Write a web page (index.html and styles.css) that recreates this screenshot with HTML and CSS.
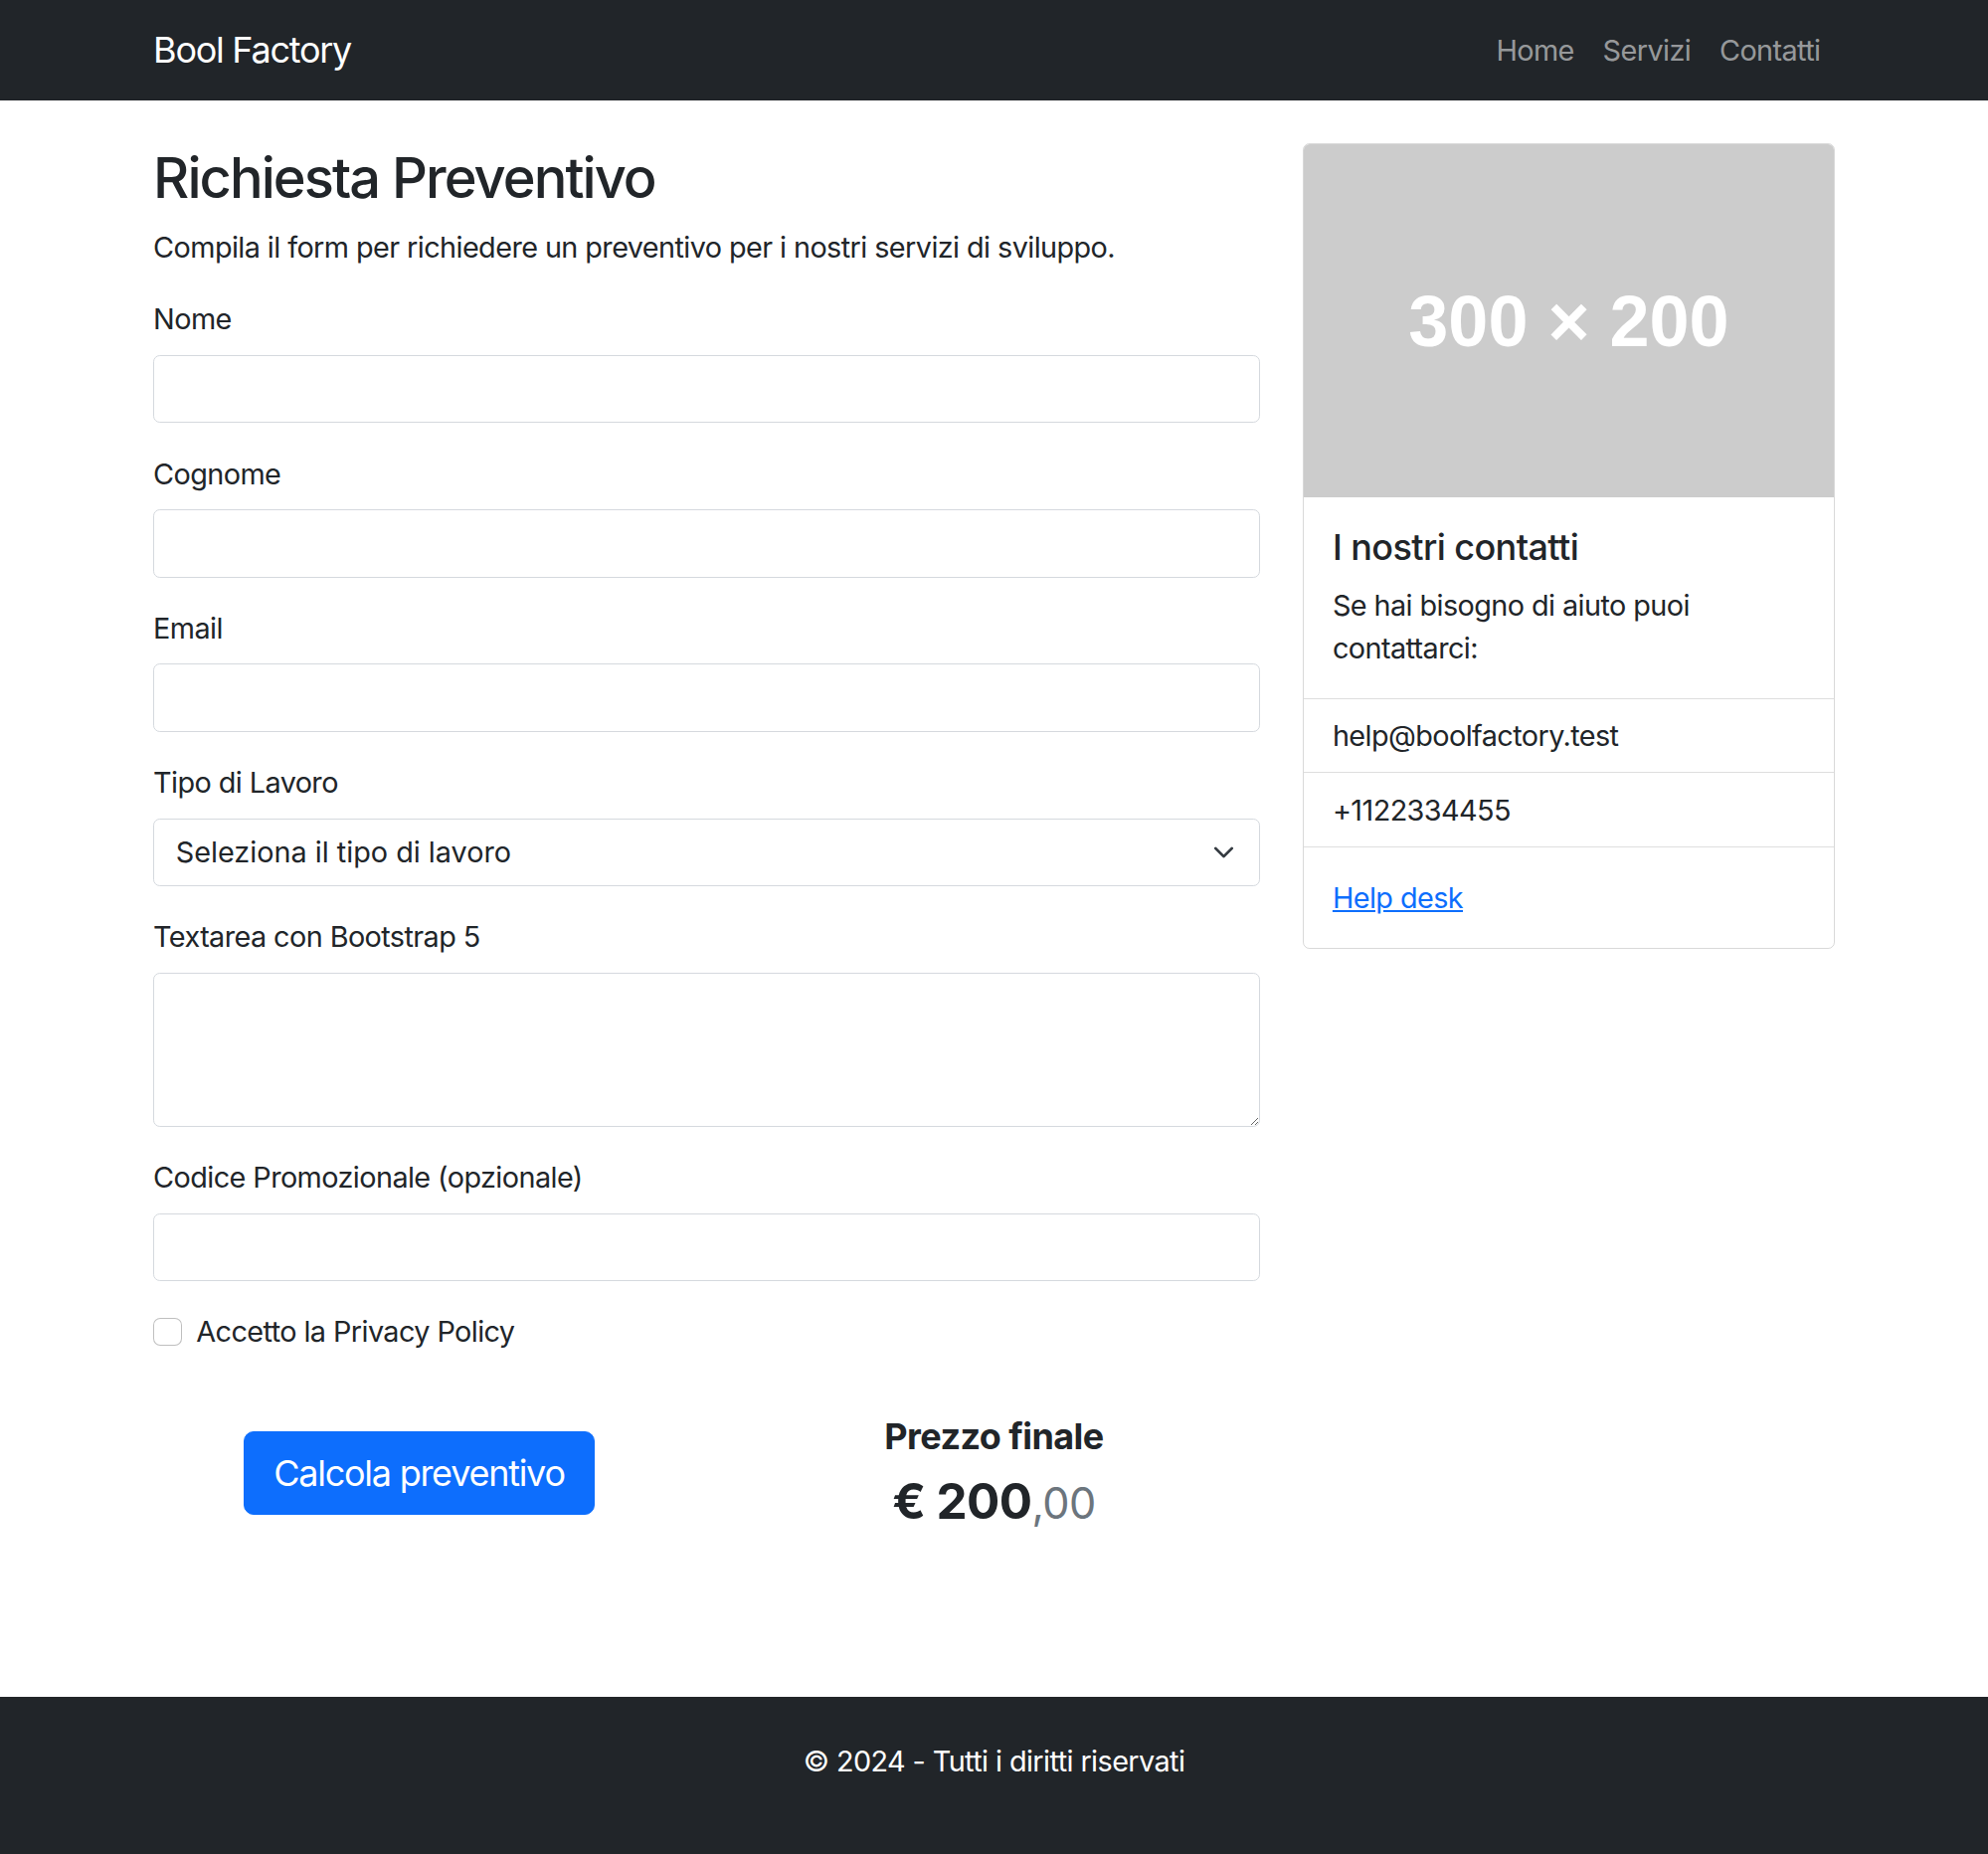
FILE: index.html
```html
<!DOCTYPE html>
<html lang="it">
<head>
<meta charset="utf-8">
<title>Bool Factory - Richiesta Preventivo</title>
<link rel="stylesheet" href="styles.css">
</head>
<body>
<header class="navbar">
  <div class="container nav-inner">
    <a class="brand" href="#">Bool Factory</a>
    <ul class="nav-links">
      <li><a href="#">Home</a></li>
      <li><a href="#">Servizi</a></li>
      <li><a href="#">Contatti</a></li>
    </ul>
  </div>
</header>

<main class="container main">
  <div class="row">
    <section class="col-main">
      <h2 class="page-title">Richiesta Preventivo</h2>
      <p class="intro">Compila il form per richiedere un preventivo per i nostri servizi di sviluppo.</p>
      <form class="quote-form">
        <div class="field">
          <label for="nome">Nome</label>
          <input id="nome" type="text" class="control">
        </div>
        <div class="field">
          <label for="cognome">Cognome</label>
          <input id="cognome" type="text" class="control">
        </div>
        <div class="field">
          <label for="email">Email</label>
          <input id="email" type="email" class="control">
        </div>
        <div class="field">
          <label for="tipo">Tipo di Lavoro</label>
          <div class="select-wrap">
            <select id="tipo" class="control select">
              <option>Seleziona il tipo di lavoro</option>
            </select>
            <svg class="chevron" viewBox="0 0 16 16" width="29" height="22" aria-hidden="true"><path fill="none" stroke="#343a40" stroke-linecap="round" stroke-linejoin="round" stroke-width="2" d="m2 5 6 6 6-6"/></svg>
          </div>
        </div>
        <div class="field">
          <label for="testo">Textarea con Bootstrap 5</label>
          <textarea id="testo" class="control textarea" rows="3"></textarea>
        </div>
        <div class="field">
          <label for="promo">Codice Promozionale (opzionale)</label>
          <input id="promo" type="text" class="control">
        </div>
        <div class="check">
          <input id="privacy" type="checkbox" class="check-input">
          <label for="privacy">Accetto la Privacy Policy</label>
        </div>
        <div class="actions">
          <div class="half">
            <button type="button" class="btn-primary">Calcola preventivo</button>
          </div>
          <div class="half price">
            <h5 class="price-label">Prezzo finale</h5>
            <h3 class="price-value">€ 200<span class="cents">,00</span></h3>
          </div>
        </div>
      </form>
    </section>

    <aside class="col-side">
      <div class="card">
        <div class="card-img">300 × 200</div>
        <div class="card-body">
          <h5 class="card-title">I nostri contatti</h5>
          <p class="card-text">Se hai bisogno di aiuto puoi contattarci:</p>
        </div>
        <ul class="list">
          <li>help@boolfactory.test</li>
          <li>+1122334455</li>
        </ul>
        <div class="card-body">
          <a href="#" class="card-link">Help desk</a>
        </div>
      </div>
    </aside>
  </div>
</main>

<footer class="footer">
  <p>© 2024 - Tutti i diritti riservati</p>
</footer>
</body>
</html>
```

FILE: styles.css
```css
* { box-sizing: border-box; }

html, body { margin: 0; padding: 0; }

body {
  font-family: "Inter", "Noto Sans", "Liberation Sans", sans-serif;
  font-size: 28.8px;
  line-height: 1.5;
  letter-spacing: -0.02em;
  color: #212529;
  background: #fff;
  min-height: 100vh;
  display: flex;
  flex-direction: column;
}

.container {
  width: 1734px;
  margin: 0 auto;
  padding: 0 21.6px;
}

/* Navbar */
.navbar {
  background: #212529;
  padding: 14.4px 0;
}
.nav-inner {
  display: flex;
  align-items: center;
  justify-content: space-between;
}
.brand {
  color: #fff;
  text-decoration: none;
  font-size: 36px;
  line-height: 54px;
  padding: 9px 0;
  letter-spacing: -0.035em;
}
.nav-links {
  list-style: none;
  margin: 0;
  padding: 0;
  display: flex;
}
.nav-links a {
  display: block;
  padding: 14.4px 14.4px;
  line-height: 43.2px;
  color: rgba(255, 255, 255, 0.55);
  text-decoration: none;
}

/* Main */
.main {
  padding-top: 43.5px;
}
.row {
  display: flex;
  margin: 0 -21.6px;
}
.col-main {
  width: 66.6667%;
  padding: 0 21.6px;
}
.col-side {
  width: 33.3333%;
  padding: 0 21.6px;
}

.page-title {
  font-size: 56px;
  font-weight: 500;
  line-height: 1.2;
  letter-spacing: -0.035em;
  margin: 0 0 14.4px;
  padding-top: 1.5px;
}
.intro {
  margin: 0 0 28.8px;
}

.field {
  margin-bottom: 29.3px;
}
.field label {
  display: block;
  margin-bottom: 14.4px;
}
.control {
  display: block;
  width: 100%;
  font: inherit;
  color: #212529;
  line-height: 43.2px;
  height: 68.4px;
  padding: 0 21.6px;
  background: #fff;
  border: 1.8px solid #d5d9de;
  border-radius: 6.75px;
  outline: none;
}
.select-wrap {
  position: relative;
}
.select {
  appearance: none;
  -webkit-appearance: none;
  padding-right: 64px;
}
.chevron {
  position: absolute;
  right: 21.6px;
  top: 23px;
  pointer-events: none;
}
.textarea {
  height: 154.8px;
  padding: 11px 21.6px;
  resize: vertical;
}

.check {
  display: flex;
  align-items: center;
  gap: 14.4px;
  min-height: 43.2px;
}
.check-input {
  appearance: none;
  -webkit-appearance: none;
  width: 28.8px;
  height: 28.8px;
  margin: 0;
  border: 1.8px solid rgba(0, 0, 0, 0.25);
  border-radius: 7.2px;
  background: #fff;
  flex: none;
}

.actions {
  display: flex;
  align-items: center;
  margin: 62px -21.6px 0;
}
.half {
  width: 50%;
  padding: 0 21.6px;
  text-align: center;
}
.btn-primary {
  font: inherit;
  font-size: 36px;
  line-height: 54px;
  letter-spacing: -0.035em;
  padding: 14.4px 28.8px;
  color: #fff;
  background: #0d6efd;
  border: 1.8px solid #0d6efd;
  border-radius: 10px;
}
.price-label {
  font-size: 36px;
  font-weight: 700;
  line-height: 1.2;
  margin: 0 0 14.4px;
}
.price-value {
  font-size: 49.4px;
  font-weight: 700;
  line-height: 1.2;
  margin: 0;
}
.cents {
  font-size: 0.875em;
  font-weight: 400;
  color: #6c757d;
}

/* Card */
.card {
  border: 1.8px solid rgba(0, 0, 0, 0.15);
  border-radius: 6.75px;
  overflow: hidden;
}
.card-img {
  height: 355px;
  background: #cccccc;
  color: #fff;
  display: flex;
  align-items: center;
  justify-content: center;
  font-family: "Liberation Sans", Arial, sans-serif;
  font-size: 72px;
  font-weight: 700;
  letter-spacing: 0;
}
.card-body {
  padding: 28.8px;
}
.card-title {
  font-size: 36px;
  font-weight: 500;
  line-height: 1.2;
  margin: 0 0 14.4px;
}
.card-text {
  margin: 0;
}
.list {
  list-style: none;
  margin: 0;
  padding: 0;
}
.list li {
  padding: 15.2px 28.8px;
  border-top: 1.8px solid rgba(0, 0, 0, 0.13);
}
.list li:last-child {
  border-bottom: 1.8px solid rgba(0, 0, 0, 0.13);
}
.card-link {
  color: #0d6efd;
  text-decoration: underline;
}

/* Footer */
.footer {
  margin-top: auto;
  background: #212529;
  color: #fff;
  text-align: center;
  padding: 43.2px 0;
}
.footer p {
  margin: 0 0 28.8px;
}
```
